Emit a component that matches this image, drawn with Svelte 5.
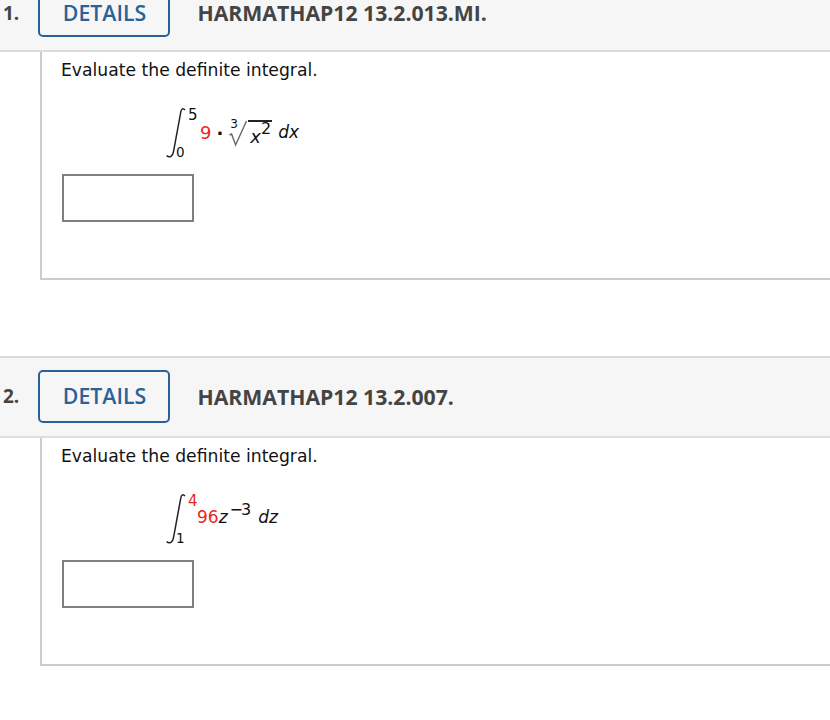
<script>
  const questions = [
    { num: '1.', code: 'HARMATHAP12 13.2.013.MI.' },
    { num: '2.', code: 'HARMATHAP12 13.2.007.' }
  ];
</script>

{#snippet integral(upper, lower, upperRed)}
  <span class="int">
    <svg width="22" height="52" viewBox="0 0 22 52" fill="none" stroke="#222" stroke-width="1.5">
      <path d="M20 3 C18 0.8 16.4 1.4 15.8 5 L8.6 44 C7.8 49.6 4.6 51 1.6 48.6"/>
    </svg>
    <span class="upper" class:red={upperRed}>{upper}</span>
    <span class="lower">{lower}</span>
  </span>
{/snippet}

<div class="page">
  {#each questions as q, i}
    <section class="question">
      <header class="head">
        <span class="num">{q.num}</span>
        <button type="button" class="details">DETAILS</button>
        <span class="code">{q.code}</span>
      </header>
      <div class="panel">
        <p class="prompt">Evaluate the definite integral.</p>
        {#if i === 0}
          <div class="math first">
            {@render integral('5', '0', false)}
            <span class="red nine">9</span>
            <span class="dot">·</span>
            <span class="root">
              <span class="index">3</span>
              <svg width="19" height="28" viewBox="0 0 19 28" fill="none" stroke="#666" stroke-width="1.4">
                <path d="M0.5 15 L2.6 14 L6.6 25 L17.5 1"/>
              </svg>
              <span class="radicand"><i>x</i><sup>2</sup></span>
            </span>
            <i class="d">dx</i>
          </div>
        {:else}
          <div class="math second">
            {@render integral('4', '1', true)}
            <span class="coef"><span class="red">96</span><i>z</i><sup>−3</sup></span>
            <i class="d">dz</i>
          </div>
        {/if}
        <input class="answer" type="text" />
      </div>
    </section>
  {/each}
</div>

<style>
  :global(body) {
    background: #fff;
    overflow: hidden;
  }

  .page {
    margin-top: -30px;
    font-family: "DejaVu Sans", sans-serif;
    color: #111;
  }

  .question {
    margin-bottom: 76px;
  }

  .head {
    height: 78px;
    display: flex;
    align-items: center;
    background: #f6f6f6;
    border-top: 2px solid #ddd;
    border-bottom: 2px solid #ddd;
    font-family: "Open Sans", sans-serif;
  }

  .num {
    width: 38px;
    margin-top: -2px;
    padding-left: 3px;
    box-sizing: border-box;
    font-size: 19px;
    font-weight: 700;
    color: #444;
  }

  .details {
    box-sizing: border-box;
    width: 132px;
    height: 53px;
    padding: 0 0 2px 1px;
    margin-top: -1px;
    background: transparent;
    border: 2px solid #2a6298;
    border-radius: 5px;
    font-family: inherit;
    font-size: 21.3px;
    font-weight: 600;
    color: #2a6298;
  }

  .code {
    margin-left: 27.5px;
    margin-top: -2px;
    font-size: 21.2px;
    font-weight: 700;
    color: #444;
  }

  /* first row sits a little lower in its header */
  .question:first-child .num,
  .question:first-child .code {
    margin-top: 3px;
  }

  .question:first-child .details {
    padding-top: 3px;
    padding-bottom: 0;
  }

  .panel {
    height: 226px;
    margin-left: 40px;
    padding-left: 20px;
    border-left: 2px solid #ccc;
    border-bottom: 2px solid #ccc;
  }

  .prompt {
    margin: 0 0 0 -1px;
    padding-top: 7px;
    font-size: 17.2px;
    line-height: 22px;
  }

  .math {
    height: 52px;
    margin-top: 26px;
    padding-left: 103px;
    display: flex;
    align-items: center;
    font-size: 18px;
    line-height: 20px;
  }

  .int {
    position: relative;
    width: 35px;
    height: 52px;
    flex: none;
  }

  .int svg {
    display: block;
  }

  .upper,
  .lower {
    position: absolute;
    line-height: 16px;
  }

  .upper {
    left: 23px;
    top: 0;
    font-size: 15px;
  }

  .lower {
    left: 11px;
    top: 37px;
    font-size: 13.5px;
  }

  .red {
    color: #e8281e;
  }

  .dot {
    margin: 1px 0 0 5px;
    font-weight: 700;
  }

  .root {
    position: relative;
    display: flex;
    margin-left: 6px;
    margin-top: 2px;
  }

  .index {
    position: absolute;
    left: 1px;
    top: -3px;
    font-size: 12px;
    line-height: 14px;
  }

  .radicand {
    border-top: 2px solid #222;
    height: 26px;
    width: 24px;
    padding-left: 2px;
    box-sizing: border-box;
    line-height: 30px;
    white-space: nowrap;
  }

  .radicand sup {
    font-size: 16px;
    line-height: 0;
    vertical-align: 9px;
  }

  .d {
    margin: -2px 0 0 6px;
    font-size: 17px;
  }

  .coef {
    margin-left: -3px;
    margin-top: -4px;
    font-size: 17px;
  }

  .coef sup {
    font-size: 16px;
    line-height: 0;
    vertical-align: 8px;
    margin-left: 2px;
    letter-spacing: -2px;
  }

  .second .d {
    margin: -4px 0 0 9px;
  }

  .answer {
    display: block;
    box-sizing: border-box;
    width: 132px;
    height: 48px;
    margin-top: 15px;
    background: #fff;
    border: 2px solid #808080;
    border-radius: 0;
    outline: none;
  }
</style>
